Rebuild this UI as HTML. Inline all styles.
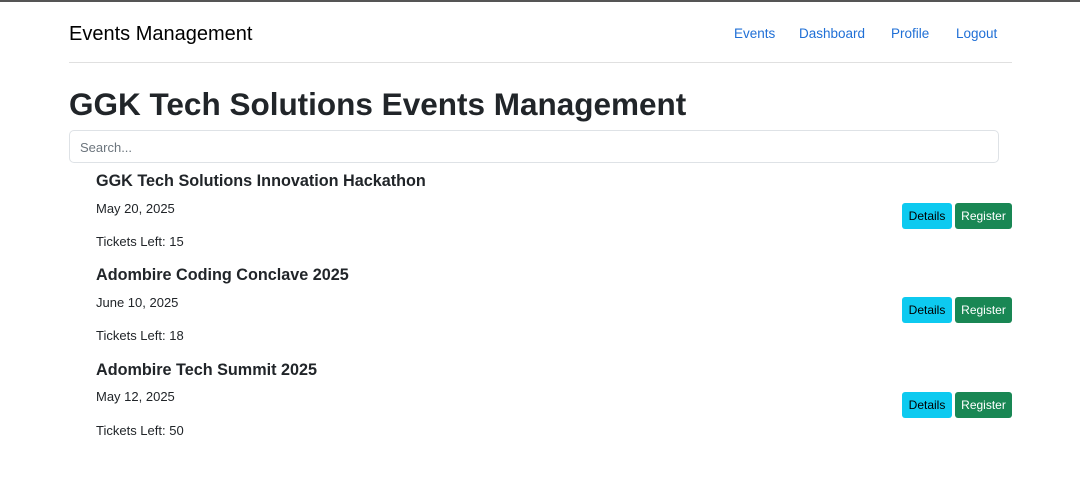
<!DOCTYPE html>
<html><head><style>
body{margin:0;width:1080px;height:485px;background:#fff;font-family:"Liberation Sans",sans-serif;color:#212529;position:relative;overflow:hidden;border-top:2px solid #555;box-sizing:border-box}
.a{position:absolute;white-space:nowrap}
.nav{color:#1f6fd6;font-size:13.5px;top:24px}
.btn{position:absolute;height:26px;line-height:26px;font-size:12px;border-radius:3px;text-align:center}
.d{background:#0dcaf0;color:#000;width:50px;left:902px}
.r{background:#198754;color:#fff;width:57px;left:955px}
.t{font-size:16.2px;font-weight:bold;left:96px}
.s{font-size:13px;left:96px}
</style></head><body>
<div class="a" style="left:69px;top:21px;font-size:20px;color:#000">Events Management</div>
<div class="a nav" style="left:734px">Events</div>
<div class="a nav" style="left:799px">Dashboard</div>
<div class="a nav" style="left:891px">Profile</div>
<div class="a nav" style="left:956px">Logout</div>
<div class="a" style="left:69px;top:60px;width:943px;height:1px;background:#e0e0e0"></div>
<div class="a" style="left:69px;top:84px;font-size:31.5px;font-weight:bold;letter-spacing:0px">GGK Tech Solutions Events Management</div>
<div class="a" style="left:69px;top:128px;width:928px;height:31px;border:1px solid #dee2e6;border-radius:5px"></div>
<div class="a" style="left:80px;top:138px;font-size:13px;color:#6c757d">Search...</div>

<div class="a t" style="top:170px">GGK Tech Solutions Innovation Hackathon</div>
<div class="a s" style="top:199px">May 20, 2025</div>
<div class="a s" style="top:232px">Tickets Left: 15</div>
<div class="btn d" style="top:201px">Details</div><div class="btn r" style="top:201px">Register</div>

<div class="a t" style="top:264px">Adombire Coding Conclave 2025</div>
<div class="a s" style="top:293px">June 10, 2025</div>
<div class="a s" style="top:326px">Tickets Left: 18</div>
<div class="btn d" style="top:295px">Details</div><div class="btn r" style="top:295px">Register</div>

<div class="a t" style="top:359px">Adombire Tech Summit 2025</div>
<div class="a s" style="top:387px">May 12, 2025</div>
<div class="a s" style="top:421px">Tickets Left: 50</div>
<div class="btn d" style="top:390px">Details</div><div class="btn r" style="top:390px">Register</div>
</body></html>
